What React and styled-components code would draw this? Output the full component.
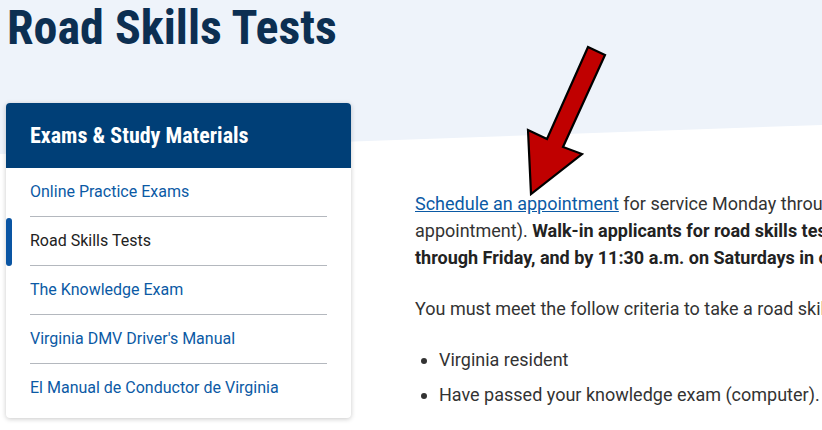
import styled, { createGlobalStyle } from "styled-components";

const GlobalStyle = createGlobalStyle`
  html, body {
    margin: 0;
    padding: 0;
    background: #fff;
    overflow: hidden;
  }
  body {
    font-family: Roboto, "Liberation Sans", sans-serif;
    color: #333;
  }
`;

const sideLinks = [
  "Online Practice Exams",
  "Road Skills Tests",
  "The Knowledge Exam",
  "Virginia DMV Driver's Manual",
  "El Manual de Conductor de Virginia",
];

export default function App() {
  return (
    <>
      <GlobalStyle />
      <Page>
        <Title>Road Skills Tests</Title>
        <Layout>
          <SideCard>
            <SideHeader>Exams &amp; Study Materials</SideHeader>
            <SideList>
              {sideLinks.map((label) => (
                <SideItem key={label} $active={label === "Road Skills Tests"}>
                  <SideLink $active={label === "Road Skills Tests"}>{label}</SideLink>
                </SideItem>
              ))}
            </SideList>
          </SideCard>
          <Content>
            <Para>
              <Link>Schedule an appointment</Link> for service Monday through Saturday (road skills tests require an
              <br />
              appointment). <strong>Walk-in applicants for road skills tests must arrive by 4 p.m. Monday</strong>
              <br />
              <strong>through Friday, and by 11:30 a.m. on Saturdays in order to be served.</strong>
            </Para>
            <Para>You must meet the follow criteria to take a road skills test:</Para>
            <Bullets>
              <li>Virginia resident</li>
              <li>Have passed your knowledge exam (computer).</li>
            </Bullets>
          </Content>
        </Layout>
        <Arrow viewBox="0 0 822 430" aria-hidden="true">
          <polygon
            points="588,47 605,55 563,147 582,154 531,194 528,130 547,139"
            fill="#c00000"
            stroke="#000"
            strokeWidth="2.2"
            strokeLinejoin="miter"
          />
        </Arrow>
      </Page>
    </>
  );
}

const Page = styled.div`
  position: relative;
  isolation: isolate;
  width: 822px;
  height: 430px;
  overflow: hidden;
  padding-left: 6px;
  box-sizing: border-box;

  &::before {
    content: "";
    position: absolute;
    z-index: -1;
    left: 0;
    top: 0;
    width: 100%;
    height: 154px;
    background: #eef3fa;
    clip-path: polygon(0 0, 100% 0, 100% 125px, 0 154px);
  }
`;

const Title = styled.h1`
  margin: 0 0 47px 1px;
  font-family: "Roboto Condensed", Roboto, sans-serif;
  font-stretch: condensed;
  font-weight: 700;
  font-size: 48px;
  line-height: 56px;
  color: #0c2f52;
`;

const Layout = styled.div`
  display: grid;
  grid-template-columns: 345px 700px;
  column-gap: 64px;
  align-items: start;
`;

const SideCard = styled.nav`
  background: #fff;
  border-radius: 4px;
  box-shadow: 0 1px 5px rgba(0, 0, 0, 0.22);
  padding-bottom: 6px;
  overflow: hidden;
`;

const SideHeader = styled.div`
  height: 65px;
  display: flex;
  align-items: center;
  padding: 0 24px;
  background: #003f77;
  color: #fff;
  font-family: "Roboto Condensed", Roboto, sans-serif;
  font-stretch: condensed;
  font-weight: 700;
  font-size: 22px;
`;

const SideList = styled.ul`
  list-style: none;
  margin: 0;
  padding: 0;
`;

const SideItem = styled.li`
  position: relative;
  padding: 0 24px;

  &::before {
    content: "";
    display: ${(p) => (p.$active ? "block" : "none")};
    position: absolute;
    left: 0;
    top: 1px;
    bottom: 0;
    width: 6px;
    border-radius: 3px;
    background: #0a55a3;
  }

  &:last-child > span {
    border-bottom: none;
  }
`;

const SideLink = styled.span`
  display: block;
  padding: 12px 0;
  line-height: 24px;
  font-size: 16px;
  color: ${(p) => (p.$active ? "#222" : "#0b5aa5")};
  border-bottom: 1px solid #b4b8be;
`;

const Content = styled.div`
  padding-top: 87px;
  font-size: 18px;
  line-height: 27px;
  color: #333;
  white-space: nowrap;

  strong {
    color: #222;
    font-weight: 700;
  }
`;

const Para = styled.p`
  margin: 0 0 24px;
`;

const Link = styled.a`
  color: #0b5aa5;
  text-decoration: underline;
  cursor: pointer;
`;

const Bullets = styled.ul`
  margin: 0;
  padding-left: 24px;

  li {
    margin-bottom: 8px;
  }
`;

const Arrow = styled.svg`
  position: absolute;
  left: 0;
  top: 0;
  width: 822px;
  height: 430px;
  pointer-events: none;
`;
